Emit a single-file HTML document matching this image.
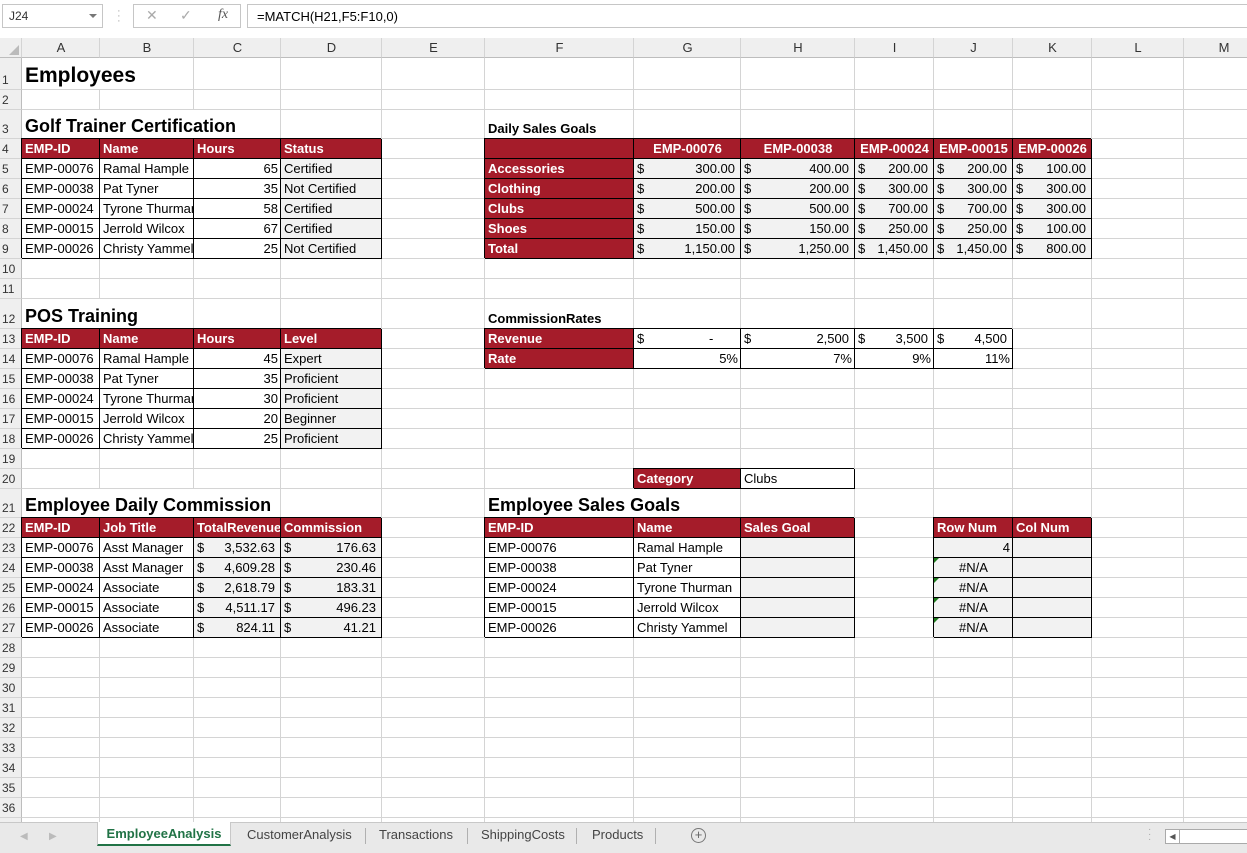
<!DOCTYPE html>
<html><head><meta charset="utf-8"><style>
*{box-sizing:border-box;margin:0;padding:0}
body{width:1247px;height:853px;overflow:hidden;background:#fff;font-family:"Liberation Sans",Arial,sans-serif;font-size:13px;color:#000;position:relative}
#fb{position:absolute;left:0;top:0;width:1247px;height:38px;background:#fff}
.box{position:absolute;border:1px solid #c6c6c6;background:#fff}
#grid{position:absolute;left:0;top:38px;width:1247px;height:784px;overflow:hidden}
table{border-collapse:separate;border-spacing:0;table-layout:fixed;width:1264px}
td{border-right:1px solid #d4d4d4;border-bottom:1px solid #d4d4d4;padding:0 2px 0 3px;white-space:nowrap;overflow:hidden;vertical-align:bottom;line-height:18px;height:20px}
td.h{background:#efefef;color:#333;font-size:12px;padding:0 0 0 2px;border-right:1px solid #bdbdbd;text-align:left}
tr.ch td{background:#efefef;color:#333;text-align:center;border-bottom:1px solid #bdbdbd;vertical-align:middle}
.r{background:#a51c2a;color:#fff;font-weight:bold}
.b{border-right:1px solid #000;border-bottom:1px solid #000;box-shadow:-1px -1px 0 #000}
.g{background:#f2f2f2}
.n{text-align:right}
.c{text-align:center}
.acc{text-align:right;padding-right:5px}
.acc span{float:left}
.t1{font-size:21px;font-weight:bold;line-height:27px}
.t2{font-size:18px;font-weight:bold;line-height:24px}
.sb{font-weight:bold}
.tri{position:relative}
.tri:before{content:"";position:absolute;left:0;top:0;border-top:5px solid #1e7b1e;border-right:5px solid transparent}
#tabs{position:absolute;left:0;top:822px;width:1247px;height:31px;background:#e9e9e9;border-top:1px solid #c8c8c8;font-size:13px;color:#444}
#tabs .t{position:absolute;top:4px}
</style></head><body>
<div id="fb">
 <div class="box" style="left:2px;top:4px;width:101px;height:24px;"><span style="position:absolute;left:6px;top:4px;font-size:12px;color:#333">J24</span><span style="position:absolute;left:86px;top:9px;border-top:4px solid #777;border-left:4px solid transparent;border-right:4px solid transparent"></span></div>
 <div style="position:absolute;left:117px;top:9px;color:#aaa;font-size:11px;line-height:5px">·<br>·<br>·</div>
 <div class="box" style="left:133px;top:4px;width:108px;height:24px;color:#aaa;font-size:14px"><span style="position:absolute;left:12px;top:2px">✕</span><span style="position:absolute;left:46px;top:2px">✓</span><span style="position:absolute;left:84px;top:2px;font-family:'Liberation Serif',serif;font-style:italic;color:#555">fx</span></div>
 <div class="box" style="left:247px;top:4px;width:1010px;height:24px;"><span style="position:absolute;left:9px;top:4px;font-size:13px">=MATCH(H21,F5:F10,0)</span></div>
</div>
<div id="grid"><table>
<colgroup><col style="width:22px"><col style="width:78px"><col style="width:94px"><col style="width:87px"><col style="width:101px"><col style="width:103px"><col style="width:149px"><col style="width:107px"><col style="width:114px"><col style="width:79px"><col style="width:79px"><col style="width:79px"><col style="width:92px"><col style="width:80px"></colgroup>
<tr class="ch"><td style="position:relative"><span style="position:absolute;right:2px;bottom:2px;border-bottom:10px solid #bbb;border-left:10px solid transparent"></span></td><td>A</td><td>B</td><td>C</td><td>D</td><td>E</td><td>F</td><td>G</td><td>H</td><td>I</td><td>J</td><td>K</td><td>L</td><td>M</td></tr>
<tr style="height:32px"><td class="h">1</td><td colspan="2" class="t1" style="height:32px">Employees</td><td></td><td></td><td></td><td></td><td></td><td></td><td></td><td></td><td></td><td></td><td></td></tr>
<tr><td class="h">2</td><td></td><td></td><td></td><td></td><td></td><td></td><td></td><td></td><td></td><td></td><td></td><td></td><td></td></tr>
<tr style="height:29px"><td class="h">3</td><td colspan="3" class="t2" style="height:29px">Golf Trainer Certification</td><td></td><td></td><td class="sb">Daily Sales Goals</td><td></td><td></td><td></td><td></td><td></td><td></td><td></td></tr>
<tr><td class="h">4</td><td class="r b">EMP-ID</td><td class="r b">Name</td><td class="r b">Hours</td><td class="r b">Status</td><td></td><td class="r b"></td><td class="r b c">EMP-00076</td><td class="r b c">EMP-00038</td><td class="r b c">EMP-00024</td><td class="r b c">EMP-00015</td><td class="r b c">EMP-00026</td><td></td><td></td></tr>
<tr><td class="h">5</td><td class="b">EMP-00076</td><td class="b">Ramal Hample</td><td class="b n">65</td><td class="b g">Certified</td><td></td><td class="r b">Accessories</td><td class="b g acc"><span>$</span>300.00</td><td class="b g acc"><span>$</span>400.00</td><td class="b g acc"><span>$</span>200.00</td><td class="b g acc"><span>$</span>200.00</td><td class="b g acc"><span>$</span>100.00</td><td></td><td></td></tr>
<tr><td class="h">6</td><td class="b">EMP-00038</td><td class="b">Pat Tyner</td><td class="b n">35</td><td class="b g">Not Certified</td><td></td><td class="r b">Clothing</td><td class="b g acc"><span>$</span>200.00</td><td class="b g acc"><span>$</span>200.00</td><td class="b g acc"><span>$</span>300.00</td><td class="b g acc"><span>$</span>300.00</td><td class="b g acc"><span>$</span>300.00</td><td></td><td></td></tr>
<tr><td class="h">7</td><td class="b">EMP-00024</td><td class="b">Tyrone Thurman</td><td class="b n">58</td><td class="b g">Certified</td><td></td><td class="r b">Clubs</td><td class="b g acc"><span>$</span>500.00</td><td class="b g acc"><span>$</span>500.00</td><td class="b g acc"><span>$</span>700.00</td><td class="b g acc"><span>$</span>700.00</td><td class="b g acc"><span>$</span>300.00</td><td></td><td></td></tr>
<tr><td class="h">8</td><td class="b">EMP-00015</td><td class="b">Jerrold Wilcox</td><td class="b n">67</td><td class="b g">Certified</td><td></td><td class="r b">Shoes</td><td class="b g acc"><span>$</span>150.00</td><td class="b g acc"><span>$</span>150.00</td><td class="b g acc"><span>$</span>250.00</td><td class="b g acc"><span>$</span>250.00</td><td class="b g acc"><span>$</span>100.00</td><td></td><td></td></tr>
<tr><td class="h">9</td><td class="b">EMP-00026</td><td class="b">Christy Yammel</td><td class="b n">25</td><td class="b g">Not Certified</td><td></td><td class="r b">Total</td><td class="b g acc"><span>$</span>1,150.00</td><td class="b g acc"><span>$</span>1,250.00</td><td class="b g acc"><span>$</span>1,450.00</td><td class="b g acc"><span>$</span>1,450.00</td><td class="b g acc"><span>$</span>800.00</td><td></td><td></td></tr>
<tr><td class="h">10</td><td></td><td></td><td></td><td></td><td></td><td></td><td></td><td></td><td></td><td></td><td></td><td></td><td></td></tr>
<tr><td class="h">11</td><td></td><td></td><td></td><td></td><td></td><td></td><td></td><td></td><td></td><td></td><td></td><td></td><td></td></tr>
<tr style="height:30px"><td class="h">12</td><td colspan="2" class="t2" style="height:30px">POS Training</td><td></td><td></td><td></td><td class="sb">CommissionRates</td><td></td><td></td><td></td><td></td><td></td><td></td><td></td></tr>
<tr><td class="h">13</td><td class="r b">EMP-ID</td><td class="r b">Name</td><td class="r b">Hours</td><td class="r b">Level</td><td></td><td class="r b">Revenue</td><td class="b acc"><span>$</span>-&nbsp;&nbsp;&nbsp;&nbsp;&nbsp;&nbsp;</td><td class="b acc"><span>$</span>2,500</td><td class="b acc"><span>$</span>3,500</td><td class="b acc"><span>$</span>4,500</td><td></td><td></td><td></td></tr>
<tr><td class="h">14</td><td class="b">EMP-00076</td><td class="b">Ramal Hample</td><td class="b n">45</td><td class="b g">Expert</td><td></td><td class="r b">Rate</td><td class="b n">5%</td><td class="b n">7%</td><td class="b n">9%</td><td class="b n">11%</td><td></td><td></td><td></td></tr>
<tr><td class="h">15</td><td class="b">EMP-00038</td><td class="b">Pat Tyner</td><td class="b n">35</td><td class="b g">Proficient</td><td></td><td></td><td></td><td></td><td></td><td></td><td></td><td></td><td></td></tr>
<tr><td class="h">16</td><td class="b">EMP-00024</td><td class="b">Tyrone Thurman</td><td class="b n">30</td><td class="b g">Proficient</td><td></td><td></td><td></td><td></td><td></td><td></td><td></td><td></td><td></td></tr>
<tr><td class="h">17</td><td class="b">EMP-00015</td><td class="b">Jerrold Wilcox</td><td class="b n">20</td><td class="b g">Beginner</td><td></td><td></td><td></td><td></td><td></td><td></td><td></td><td></td><td></td></tr>
<tr><td class="h">18</td><td class="b">EMP-00026</td><td class="b">Christy Yammel</td><td class="b n">25</td><td class="b g">Proficient</td><td></td><td></td><td></td><td></td><td></td><td></td><td></td><td></td><td></td></tr>
<tr><td class="h">19</td><td></td><td></td><td></td><td></td><td></td><td></td><td></td><td></td><td></td><td></td><td></td><td></td><td></td></tr>
<tr><td class="h">20</td><td></td><td></td><td></td><td></td><td></td><td></td><td class="r b">Category</td><td class="b">Clubs</td><td></td><td></td><td></td><td></td><td></td></tr>
<tr style="height:29px"><td class="h">21</td><td colspan="3" class="t2" style="height:29px">Employee Daily Commission</td><td></td><td></td><td colspan="2" class="t2">Employee Sales Goals</td><td></td><td></td><td></td><td></td><td></td><td></td></tr>
<tr><td class="h">22</td><td class="r b">EMP-ID</td><td class="r b">Job Title</td><td class="r b">TotalRevenue</td><td class="r b">Commission</td><td></td><td class="r b">EMP-ID</td><td class="r b">Name</td><td class="r b">Sales Goal</td><td></td><td class="r b">Row Num</td><td class="r b">Col Num</td><td></td><td></td></tr>
<tr><td class="h">23</td><td class="b">EMP-00076</td><td class="b">Asst Manager</td><td class="b g acc"><span>$</span>3,532.63</td><td class="b g acc"><span>$</span>176.63</td><td></td><td class="b">EMP-00076</td><td class="b">Ramal Hample</td><td class="b g"></td><td></td><td class="b g n">4</td><td class="b g"></td><td></td><td></td></tr>
<tr><td class="h">24</td><td class="b">EMP-00038</td><td class="b">Asst Manager</td><td class="b g acc"><span>$</span>4,609.28</td><td class="b g acc"><span>$</span>230.46</td><td></td><td class="b">EMP-00038</td><td class="b">Pat Tyner</td><td class="b g"></td><td></td><td class="b g c tri">#N/A</td><td class="b g"></td><td></td><td></td></tr>
<tr><td class="h">25</td><td class="b">EMP-00024</td><td class="b">Associate</td><td class="b g acc"><span>$</span>2,618.79</td><td class="b g acc"><span>$</span>183.31</td><td></td><td class="b">EMP-00024</td><td class="b">Tyrone Thurman</td><td class="b g"></td><td></td><td class="b g c tri">#N/A</td><td class="b g"></td><td></td><td></td></tr>
<tr><td class="h">26</td><td class="b">EMP-00015</td><td class="b">Associate</td><td class="b g acc"><span>$</span>4,511.17</td><td class="b g acc"><span>$</span>496.23</td><td></td><td class="b">EMP-00015</td><td class="b">Jerrold Wilcox</td><td class="b g"></td><td></td><td class="b g c tri">#N/A</td><td class="b g"></td><td></td><td></td></tr>
<tr><td class="h">27</td><td class="b">EMP-00026</td><td class="b">Associate</td><td class="b g acc"><span>$</span>824.11</td><td class="b g acc"><span>$</span>41.21</td><td></td><td class="b">EMP-00026</td><td class="b">Christy Yammel</td><td class="b g"></td><td></td><td class="b g c tri">#N/A</td><td class="b g"></td><td></td><td></td></tr>
<tr><td class="h">28</td><td></td><td></td><td></td><td></td><td></td><td></td><td></td><td></td><td></td><td></td><td></td><td></td><td></td></tr>
<tr><td class="h">29</td><td></td><td></td><td></td><td></td><td></td><td></td><td></td><td></td><td></td><td></td><td></td><td></td><td></td></tr>
<tr><td class="h">30</td><td></td><td></td><td></td><td></td><td></td><td></td><td></td><td></td><td></td><td></td><td></td><td></td><td></td></tr>
<tr><td class="h">31</td><td></td><td></td><td></td><td></td><td></td><td></td><td></td><td></td><td></td><td></td><td></td><td></td><td></td></tr>
<tr><td class="h">32</td><td></td><td></td><td></td><td></td><td></td><td></td><td></td><td></td><td></td><td></td><td></td><td></td><td></td></tr>
<tr><td class="h">33</td><td></td><td></td><td></td><td></td><td></td><td></td><td></td><td></td><td></td><td></td><td></td><td></td><td></td></tr>
<tr><td class="h">34</td><td></td><td></td><td></td><td></td><td></td><td></td><td></td><td></td><td></td><td></td><td></td><td></td><td></td></tr>
<tr><td class="h">35</td><td></td><td></td><td></td><td></td><td></td><td></td><td></td><td></td><td></td><td></td><td></td><td></td><td></td></tr>
<tr><td class="h">36</td><td></td><td></td><td></td><td></td><td></td><td></td><td></td><td></td><td></td><td></td><td></td><td></td><td></td></tr>
<tr><td class="h">37</td><td></td><td></td><td></td><td></td><td></td><td></td><td></td><td></td><td></td><td></td><td></td><td></td><td></td></tr>
</table></div>
<div id="tabs">
 <span class="t" style="left:20px;color:#bbb;font-size:10px;top:8px">◀</span><span class="t" style="left:49px;color:#bbb;font-size:10px;top:8px">▶</span>
 <div style="position:absolute;left:97px;top:-1px;width:134px;height:24px;background:#fff;border-left:1px solid #c8c8c8;border-right:1px solid #c8c8c8;border-bottom:2px solid #217346;text-align:center;line-height:24px;color:#217346;font-weight:bold">EmployeeAnalysis</div>
 <span class="t" style="left:247px">CustomerAnalysis</span>
 <span style="position:absolute;left:365px;top:5px;width:1px;height:16px;background:#b0b0b0"></span>
 <span class="t" style="left:379px">Transactions</span>
 <span style="position:absolute;left:467px;top:5px;width:1px;height:16px;background:#b0b0b0"></span>
 <span class="t" style="left:481px">ShippingCosts</span>
 <span style="position:absolute;left:576px;top:5px;width:1px;height:16px;background:#b0b0b0"></span>
 <span class="t" style="left:592px">Products</span>
 <span style="position:absolute;left:655px;top:5px;width:1px;height:16px;background:#b0b0b0"></span>
 <span style="position:absolute;left:691px;top:5px;width:15px;height:15px;border:1px solid #777;border-radius:50%;text-align:center;line-height:12px;font-size:13px;color:#666">+</span>
 <span style="position:absolute;left:1148px;top:4px;color:#aaa;font-size:10px;line-height:5px">·<br>·<br>·</span>
 <div style="position:absolute;left:1165px;top:6px;width:90px;height:15px;border:1px solid #aaa;background:#fff"><span style="position:absolute;left:0;top:0;width:14px;height:13px;border-right:1px solid #aaa;font-size:8px;color:#555;text-align:center;line-height:13px">◀</span></div>
</div>
</body></html>
